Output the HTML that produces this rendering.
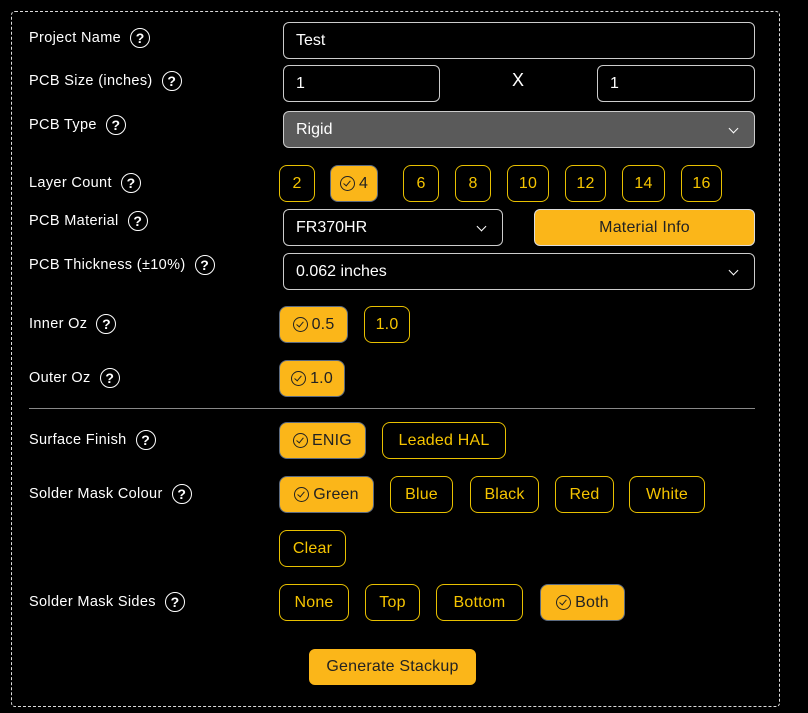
<!DOCTYPE html>
<html><head><meta charset="utf-8"><style>
*{box-sizing:border-box;margin:0;padding:0}
body{width:808px;height:713px;background:#000;font-family:"Liberation Sans",sans-serif;position:relative;overflow:hidden}
.frame{position:absolute;left:11px;top:11px;width:769px;height:696px;border:1px dashed #ddd;border-radius:4px}
.lbl{position:absolute;left:29px;height:22px;display:flex;align-items:center;color:#fff;font-size:14.5px;letter-spacing:.35px;white-space:nowrap}
.q{display:inline-flex;width:20px;height:20px;border:1.5px solid #fff;border-radius:50%;align-items:center;justify-content:center;font-size:14px;font-weight:bold;margin-left:9px;letter-spacing:0}
.in{position:absolute;border:1px solid #ccc;border-radius:6px;color:#fff;font-size:16px;display:flex;align-items:center;padding-left:12px;height:37px}
.sel:after{content:"";position:absolute;right:17px;top:13px;width:6px;height:6px;border-right:1.6px solid #fff;border-bottom:1.6px solid #fff;transform:rotate(45deg)}
.b{position:absolute;height:37px;border:1px solid #e8c000;border-radius:8px;color:#f5c400;font-size:16px;display:flex;align-items:center;justify-content:center;letter-spacing:.2px}
.on{background:#fbb619;border-color:#5b6a80;color:#222}
.ck{display:inline-block;width:15px;height:15px;border:1.4px solid #222;border-radius:50%;position:relative;margin-right:4px}
.ck:after{content:"";position:absolute;left:4px;top:2px;width:3px;height:6px;border-right:1.4px solid #222;border-bottom:1.4px solid #222;transform:rotate(40deg)}
</style></head><body>
<div class="frame"></div>

<div class="lbl" style="top:27px">Project Name<span class="q">?</span></div>
<div class="lbl" style="top:70px">PCB Size (inches)<span class="q">?</span></div>
<div class="lbl" style="top:114px">PCB Type<span class="q">?</span></div>
<div class="lbl" style="top:172px">Layer Count<span class="q">?</span></div>
<div class="lbl" style="top:210px">PCB Material<span class="q">?</span></div>
<div class="lbl" style="top:254px">PCB Thickness (±10%)<span class="q">?</span></div>
<div class="lbl" style="top:313px">Inner Oz<span class="q">?</span></div>
<div class="lbl" style="top:367px">Outer Oz<span class="q">?</span></div>
<div class="lbl" style="top:429px">Surface Finish<span class="q">?</span></div>
<div class="lbl" style="top:483px">Solder Mask Colour<span class="q">?</span></div>
<div class="lbl" style="top:591px">Solder Mask Sides<span class="q">?</span></div>

<div class="in" style="left:283px;top:22px;width:472px">Test</div>
<div class="in" style="left:283px;top:65px;width:157px">1</div>
<div style="position:absolute;left:512px;top:70px;color:#fff;font-size:18px">X</div>
<div class="in" style="left:597px;top:65px;width:158px">1</div>
<div class="in sel" style="left:283px;top:111px;width:472px;background:#5a5a5a">Rigid</div>

<div class="b" style="left:279px;top:165px;width:36px">2</div>
<div class="b on" style="left:330px;top:165px;width:48px"><span class="ck"></span>4</div>
<div class="b" style="left:403px;top:165px;width:36px">6</div>
<div class="b" style="left:455px;top:165px;width:36px">8</div>
<div class="b" style="left:507px;top:165px;width:42px">10</div>
<div class="b" style="left:565px;top:165px;width:41px">12</div>
<div class="b" style="left:622px;top:165px;width:43px">14</div>
<div class="b" style="left:681px;top:165px;width:41px">16</div>

<div class="in sel" style="left:283px;top:209px;width:220px">FR370HR</div>
<div class="b on" style="left:534px;top:209px;width:221px;border-color:#ddd;border-radius:6px">Material Info</div>
<div class="in sel" style="left:283px;top:253px;width:472px">0.062 inches</div>

<div class="b on" style="left:279px;top:306px;width:69px"><span class="ck"></span>0.5</div>
<div class="b" style="left:364px;top:306px;width:46px">1.0</div>
<div class="b on" style="left:279px;top:360px;width:66px"><span class="ck"></span>1.0</div>

<div style="position:absolute;left:29px;top:408px;width:726px;height:1px;background:#888"></div>

<div class="b on" style="left:279px;top:422px;width:87px"><span class="ck"></span>ENIG</div>
<div class="b" style="left:382px;top:422px;width:124px">Leaded HAL</div>

<div class="b on" style="left:279px;top:476px;width:95px"><span class="ck"></span>Green</div>
<div class="b" style="left:390px;top:476px;width:63px">Blue</div>
<div class="b" style="left:470px;top:476px;width:69px">Black</div>
<div class="b" style="left:555px;top:476px;width:59px">Red</div>
<div class="b" style="left:629px;top:476px;width:76px">White</div>
<div class="b" style="left:279px;top:530px;width:67px">Clear</div>

<div class="b" style="left:279px;top:584px;width:70px">None</div>
<div class="b" style="left:365px;top:584px;width:55px">Top</div>
<div class="b" style="left:436px;top:584px;width:87px">Bottom</div>
<div class="b on" style="left:540px;top:584px;width:85px"><span class="ck"></span>Both</div>

<div class="b on" style="left:309px;top:649px;width:167px;height:36px;border-color:#fbb619;border-radius:6px">Generate Stackup</div>
</body></html>
